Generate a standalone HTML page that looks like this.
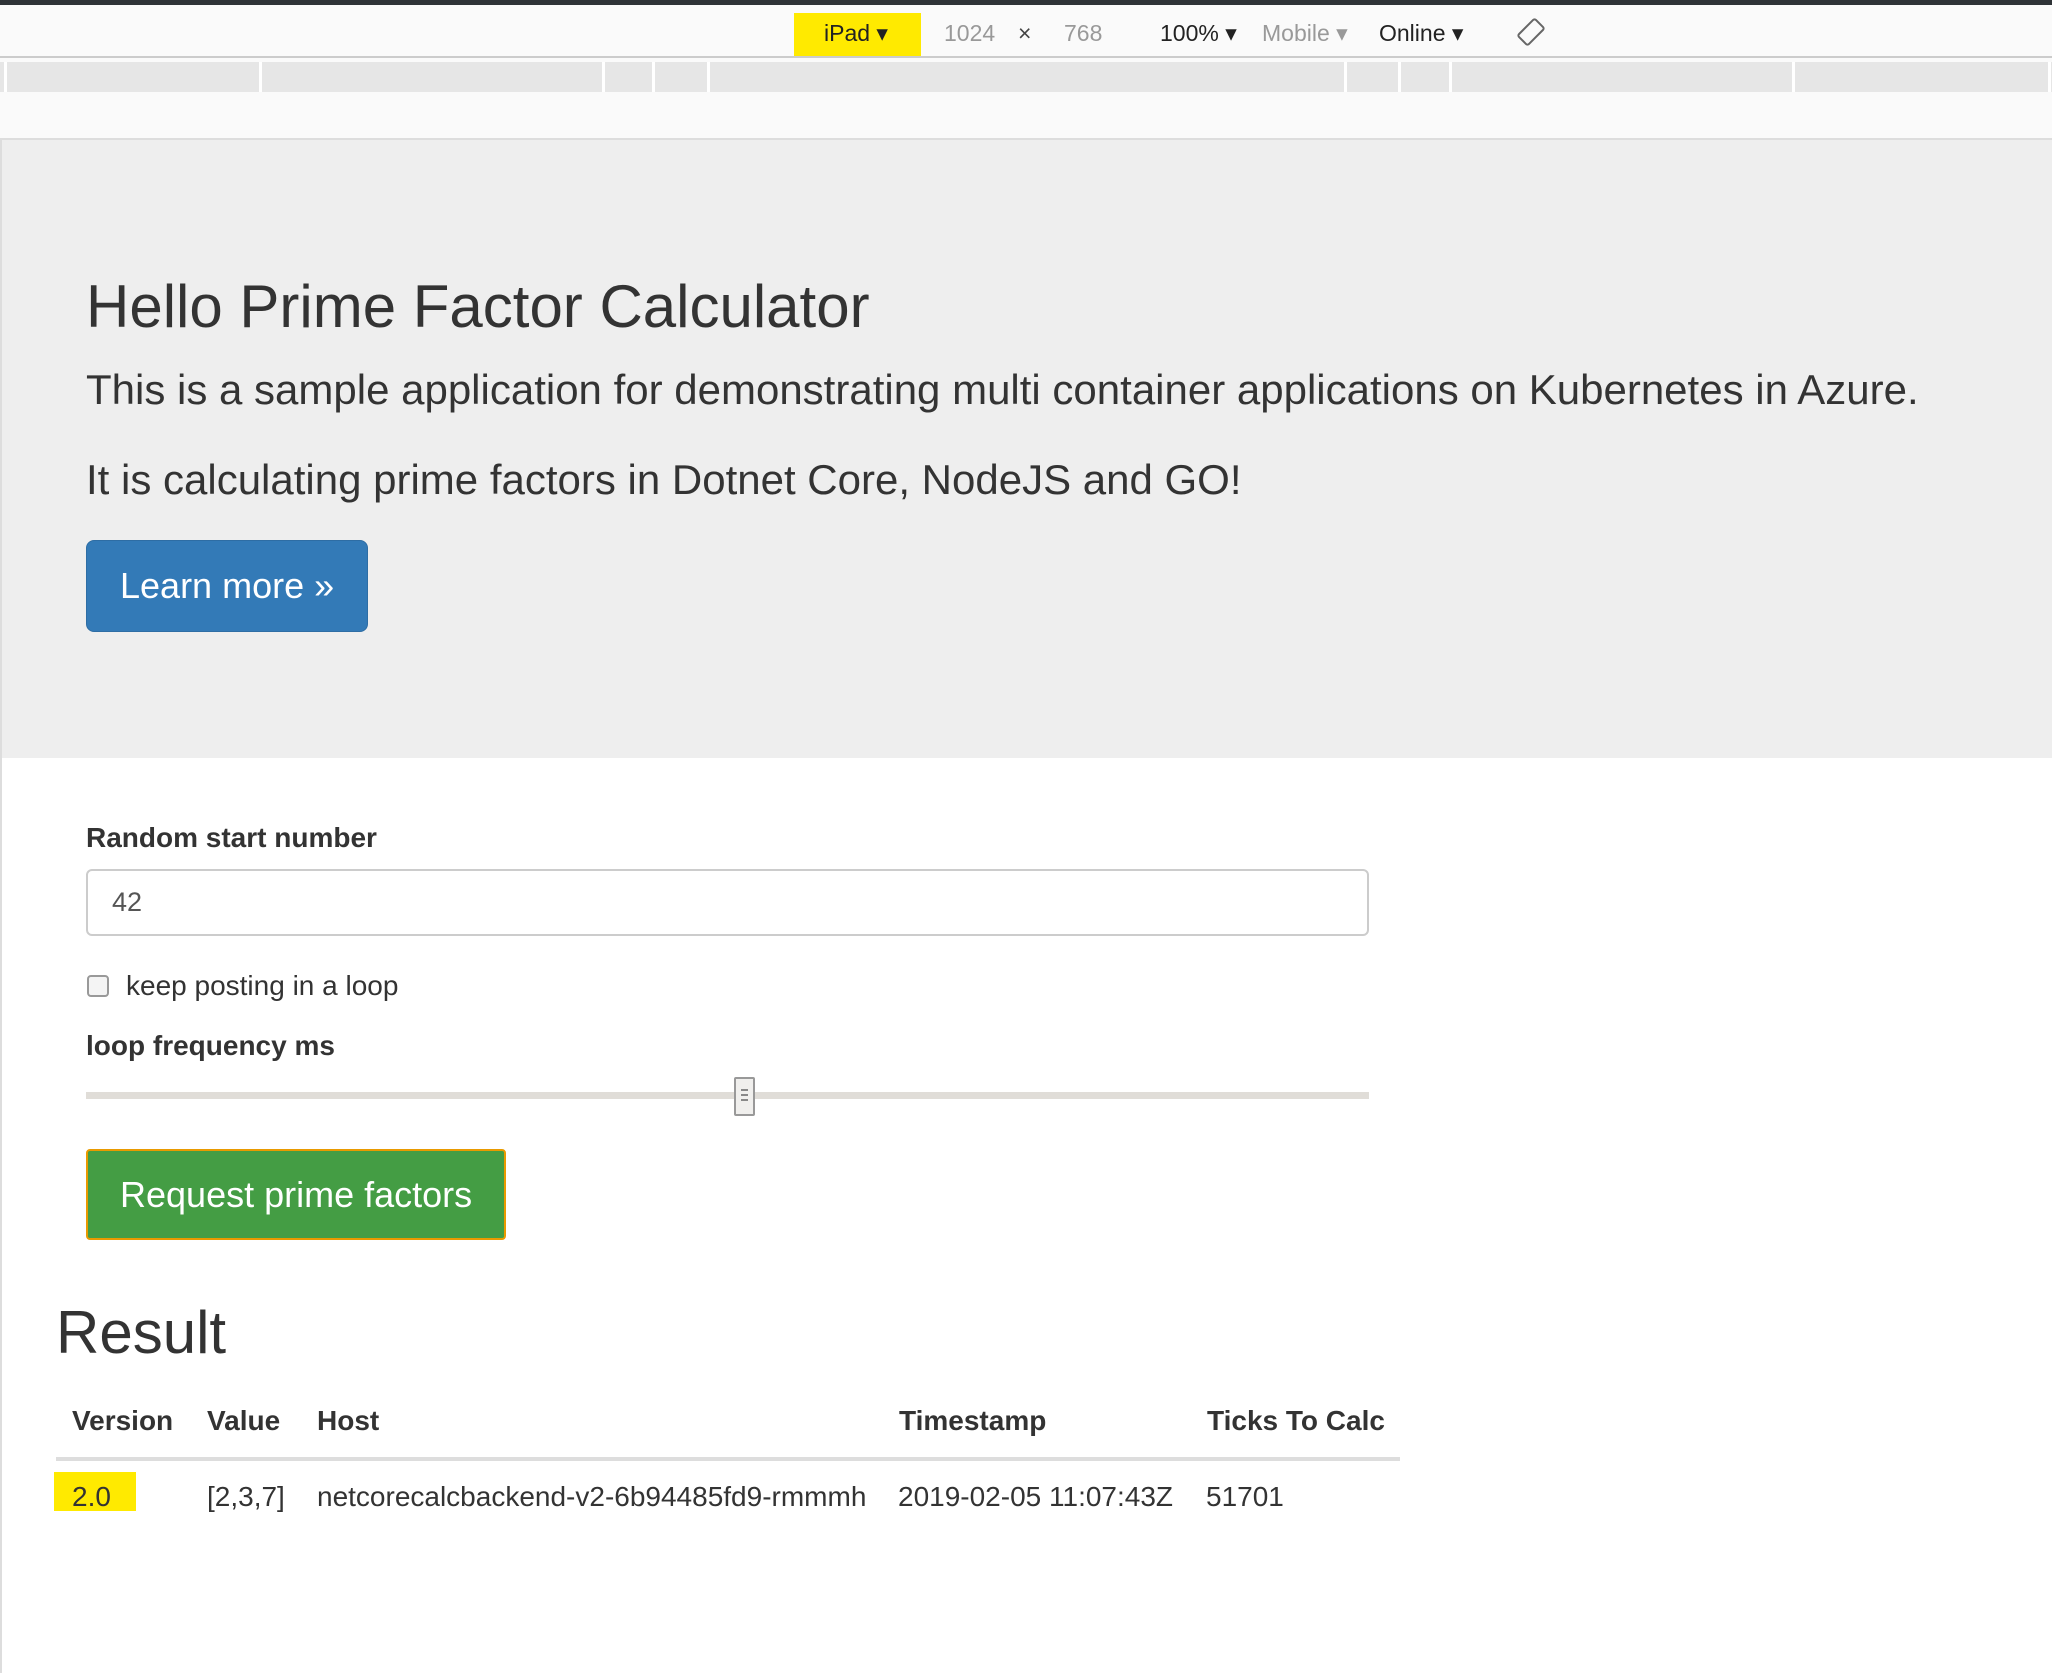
<!DOCTYPE html>
<html><head><meta charset="utf-8"><style>
*{margin:0;padding:0;box-sizing:border-box}
body{width:2052px;height:1673px;background:#fff;font-family:"Liberation Sans",Arial,sans-serif;color:#333;position:relative;overflow:hidden}
.a{position:absolute;white-space:nowrap}
.tb{font-size:23px;line-height:23px;top:22px}
</style></head><body>
<div class="a" style="left:0;top:0;width:2052px;height:5px;background:#2f3337"></div>
<div class="a" style="left:0;top:5px;width:2052px;height:52px;background:#fafafa"></div>
<div class="a" style="left:0;top:56px;width:2052px;height:2px;background:#ccc"></div>
<div class="a" style="left:794px;top:13px;width:127px;height:43px;background:#ffea00"></div>
<div class="a tb" style="left:824px;color:#222">iPad ▾</div>
<div class="a tb" style="left:944px;color:#999">1024</div>
<div class="a tb" style="left:1018px;color:#444">×</div>
<div class="a tb" style="left:1064px;color:#999">768</div>
<div class="a tb" style="left:1160px;color:#222">100% ▾</div>
<div class="a tb" style="left:1262px;color:#999">Mobile ▾</div>
<div class="a tb" style="left:1379px;color:#222">Online ▾</div>
<svg class="a" style="left:1516px;top:17px" width="30" height="30" viewBox="0 0 30 30"><g fill="none" stroke="#666" stroke-width="2"><rect x="8" y="3" width="14" height="24" rx="2" transform="rotate(45 15 15)"/></g></svg>
<div class="a" style="left:0;top:58px;width:2052px;height:81px;background:#fafafa"></div>
<div class="a" style="left:0;top:62px;width:2052px;height:30px;background:#e6e6e6"></div>
<div class="a" style="left:4px;top:62px;width:3px;height:30px;background:#fff"></div>
<div class="a" style="left:259px;top:62px;width:3px;height:30px;background:#fff"></div>
<div class="a" style="left:602px;top:62px;width:3px;height:30px;background:#fff"></div>
<div class="a" style="left:652px;top:62px;width:3px;height:30px;background:#fff"></div>
<div class="a" style="left:707px;top:62px;width:3px;height:30px;background:#fff"></div>
<div class="a" style="left:1344px;top:62px;width:3px;height:30px;background:#fff"></div>
<div class="a" style="left:1398px;top:62px;width:3px;height:30px;background:#fff"></div>
<div class="a" style="left:1449px;top:62px;width:3px;height:30px;background:#fff"></div>
<div class="a" style="left:1792px;top:62px;width:3px;height:30px;background:#fff"></div>
<div class="a" style="left:2048px;top:62px;width:3px;height:30px;background:#fff"></div>
<div class="a" style="left:0;top:138px;width:2052px;height:1535px;border-left:2px solid #ddd;border-top:2px solid #ddd"></div>
<div class="a" style="left:2px;top:140px;width:2050px;height:618px;background:#eee"></div>
<div class="a" style="left:86px;top:272px;font-size:60px;line-height:70px">Hello Prime Factor Calculator</div>
<div class="a" style="left:86px;top:366px;font-size:42px;line-height:48px">This is a sample application for demonstrating multi container applications on Kubernetes in Azure.</div>
<div class="a" style="left:86px;top:456px;font-size:42px;line-height:48px">It is calculating prime factors in Dotnet Core, NodeJS and GO!</div>
<div class="a" style="left:86px;top:540px;width:282px;height:92px;background:#337ab7;border:1px solid #2e6da4;border-radius:8px;color:#fff;font-size:36px;line-height:90px;padding-left:33px">Learn more »</div>
<div class="a" style="left:86px;top:822px;font-size:28px;font-weight:bold">Random start number</div>
<div class="a" style="left:86px;top:869px;width:1283px;height:67px;border:2px solid #ccc;border-radius:6px;font-size:27px;line-height:63px;padding-left:24px;color:#555">42</div>
<div class="a" style="left:87px;top:975px;width:22px;height:22px;border:2px solid #999;border-radius:4px;background:#f4f4f4"></div>
<div class="a" style="left:126px;top:970px;font-size:28px">keep posting in a loop</div>
<div class="a" style="left:86px;top:1030px;font-size:28px;font-weight:bold">loop frequency ms</div>
<div class="a" style="left:86px;top:1092px;width:1283px;height:7px;background:#e0ddd8"></div>
<div class="a" style="left:734px;top:1077px;width:21px;height:39px;background:#f0efed;border:2px solid #999;border-radius:2px"></div>
<div class="a" style="left:741px;top:1089px;width:7px;height:2px;background:#888;box-shadow:0 5px 0 #888,0 10px 0 #888"></div>
<div class="a" style="left:86px;top:1149px;width:420px;height:91px;background:#449d44;border:2px solid #e99a00;border-radius:4px;color:#fff;font-size:36px;line-height:87px;padding-left:32px">Request prime factors</div>
<div class="a" style="left:56px;top:1298px;font-size:60px;line-height:70px">Result</div>
<div class="a" style="left:72px;top:1405px;font-size:28px;font-weight:bold">Version</div>
<div class="a" style="left:207px;top:1405px;font-size:28px;font-weight:bold">Value</div>
<div class="a" style="left:317px;top:1405px;font-size:28px;font-weight:bold">Host</div>
<div class="a" style="left:899px;top:1405px;font-size:28px;font-weight:bold">Timestamp</div>
<div class="a" style="left:1207px;top:1405px;font-size:28px;font-weight:bold">Ticks To Calc</div>
<div class="a" style="left:56px;top:1457px;width:1344px;height:4px;background:#ddd"></div>
<div class="a" style="left:54px;top:1472px;width:82px;height:39px;background:#ffea00"></div>
<div class="a" style="left:72px;top:1481px;font-size:28px">2.0</div>
<div class="a" style="left:207px;top:1481px;font-size:28px">[2,3,7]</div>
<div class="a" style="left:317px;top:1481px;font-size:28px">netcorecalcbackend-v2-6b94485fd9-rmmmh</div>
<div class="a" style="left:898px;top:1481px;font-size:28px">2019-02-05 11:07:43Z</div>
<div class="a" style="left:1206px;top:1481px;font-size:28px">51701</div>
</body></html>
